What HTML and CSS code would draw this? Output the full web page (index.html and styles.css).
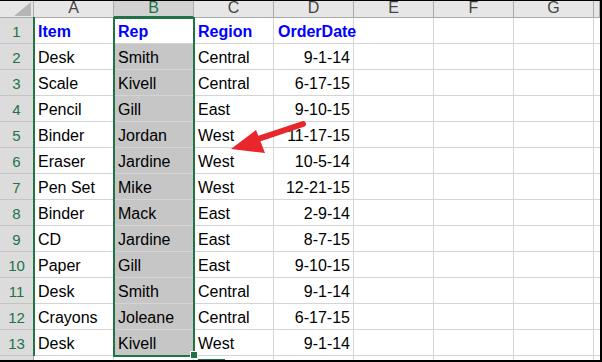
FILE: index.html
```html
<!DOCTYPE html>
<html>
<head>
<meta charset="utf-8">
<link rel="stylesheet" href="styles.css">
</head>
<body>
<div class="sheet">
  <div class="grid">
    <div class="corner"><svg width="33" height="16" viewBox="0 0 33 16"><polygon points="14,15 31,15 31,1" fill="#b5b5b5"/></svg></div>
    <div class="ch">A</div><div class="ch sel">B</div><div class="ch">C</div><div class="ch">D</div><div class="ch">E</div><div class="ch">F</div><div class="ch">G</div><div class="ch"></div>

    <div class="rh">1</div><div class="c hd">Item</div><div class="c b act hd">Rep</div><div class="c hd">Region</div><div class="c hd">OrderDate</div><div class="c"></div><div class="c"></div><div class="c"></div><div class="c"></div>
    <div class="rh">2</div><div class="c">Desk</div><div class="c b">Smith</div><div class="c">Central</div><div class="c r">9-1-14</div><div class="c"></div><div class="c"></div><div class="c"></div><div class="c"></div>
    <div class="rh">3</div><div class="c">Scale</div><div class="c b">Kivell</div><div class="c">Central</div><div class="c r">6-17-15</div><div class="c"></div><div class="c"></div><div class="c"></div><div class="c"></div>
    <div class="rh">4</div><div class="c">Pencil</div><div class="c b">Gill</div><div class="c">East</div><div class="c r">9-10-15</div><div class="c"></div><div class="c"></div><div class="c"></div><div class="c"></div>
    <div class="rh">5</div><div class="c">Binder</div><div class="c b">Jordan</div><div class="c">West</div><div class="c r">11-17-15</div><div class="c"></div><div class="c"></div><div class="c"></div><div class="c"></div>
    <div class="rh">6</div><div class="c">Eraser</div><div class="c b">Jardine</div><div class="c">West</div><div class="c r">10-5-14</div><div class="c"></div><div class="c"></div><div class="c"></div><div class="c"></div>
    <div class="rh">7</div><div class="c">Pen Set</div><div class="c b">Mike</div><div class="c">West</div><div class="c r">12-21-15</div><div class="c"></div><div class="c"></div><div class="c"></div><div class="c"></div>
    <div class="rh">8</div><div class="c">Binder</div><div class="c b">Mack</div><div class="c">East</div><div class="c r">2-9-14</div><div class="c"></div><div class="c"></div><div class="c"></div><div class="c"></div>
    <div class="rh">9</div><div class="c">CD</div><div class="c b">Jardine</div><div class="c">East</div><div class="c r">8-7-15</div><div class="c"></div><div class="c"></div><div class="c"></div><div class="c"></div>
    <div class="rh">10</div><div class="c">Paper</div><div class="c b">Gill</div><div class="c">East</div><div class="c r">9-10-15</div><div class="c"></div><div class="c"></div><div class="c"></div><div class="c"></div>
    <div class="rh">11</div><div class="c">Desk</div><div class="c b">Smith</div><div class="c">Central</div><div class="c r">9-1-14</div><div class="c"></div><div class="c"></div><div class="c"></div><div class="c"></div>
    <div class="rh">12</div><div class="c">Crayons</div><div class="c b">Joleane</div><div class="c">Central</div><div class="c r">6-17-15</div><div class="c"></div><div class="c"></div><div class="c"></div><div class="c"></div>
    <div class="rh">13</div><div class="c">Desk</div><div class="c b">Kivell</div><div class="c">West</div><div class="c r">9-1-14</div><div class="c"></div><div class="c"></div><div class="c"></div><div class="c"></div>
    <div class="rh"></div><div class="c"></div><div class="c"></div><div class="c"></div><div class="c"></div><div class="c"></div><div class="c"></div><div class="c"></div><div class="c"></div>
  </div>
  <div class="rowsel"></div>
  <div class="selbox"></div>
  <div class="handle"></div>
  <div class="tailbar"></div>
  <svg class="arrow" width="602" height="362" viewBox="0 0 602 362">
    <line x1="303" y1="124" x2="252" y2="141" stroke="#e8262c" stroke-width="6" stroke-linecap="round"/>
    <polygon points="231,149 256,130 265,153" fill="#e8262c"/>
  </svg>
</div>
</body>
</html>
```
FILE: styles.css
```css
html, body {
  margin: 0;
  padding: 0;
  background: #ffffff;
}
.sheet {
  position: relative;
  width: 600px;
  height: 359px;
  border-top: 1px solid #000;
  border-right: 2px solid #000;
  border-bottom: 2px solid #000;
  overflow: hidden;
  font-family: "Liberation Sans", Arial, sans-serif;
}
.grid {
  display: grid;
  grid-template-columns: 34px repeat(7, 80px) 6px;
  grid-template-rows: 17px repeat(14, 26px);
}
.grid > div {
  box-sizing: border-box;
  border-right: 1px solid #d4d4d4;
  border-bottom: 1px solid #d4d4d4;
  white-space: nowrap;
  overflow: visible;
}
.grid > .corner {
  background: #e6e6e6;
  border-right: 1px solid #ababab;
  border-bottom: 1px solid #ababab;
}
.corner svg { display: block; }
.grid > .ch {
  background: #e6e6e6;
  border-right: 1px solid #ababab;
  border-bottom: 1px solid #ababab;
  text-align: center;
  font-size: 16px;
  line-height: 14px;
  color: #444444;
}
.grid > .ch.sel {
  background: #d2d2d2;
  color: #217346;
  border-bottom: 2px solid #217346;
}
.grid > .rh {
  background: #dcdcdc;
  border-right: 1px solid #ababab;
  border-bottom: 1px solid #c4c4c4;
  text-align: center;
  font-size: 15px;
  padding-top: 3px;
  line-height: 22px;
  color: #217346;
}
.c {
  font-size: 16px;
  color: #000;
  padding: 3px 3px 0 4px;
  line-height: 22px;
}
.c.r { text-align: right; }
.c.b { background: #c6c6c6; }
.c.b.act { background: #ffffff; }
.c.hd {
  color: #0000ff;
  font-weight: bold;
}
.rowsel {
  position: absolute;
  left: 33px;
  top: 16px;
  width: 2px;
  height: 339px;
  background: #217346;
}
.selbox {
  position: absolute;
  left: 113px;
  top: 16px;
  width: 82px;
  height: 340px;
  box-sizing: border-box;
  border: 2px solid #217346;
}
.handle {
  position: absolute;
  left: 190px;
  top: 350px;
  width: 6px;
  height: 6px;
  background: #217346;
  border: 1px solid #ffffff;
}
.tailbar {
  position: absolute;
  left: 198px;
  top: 358px;
  width: 27px;
  height: 2px;
  background: #217346;
}
.arrow {
  position: absolute;
  left: 0;
  top: -1px;
}
```
